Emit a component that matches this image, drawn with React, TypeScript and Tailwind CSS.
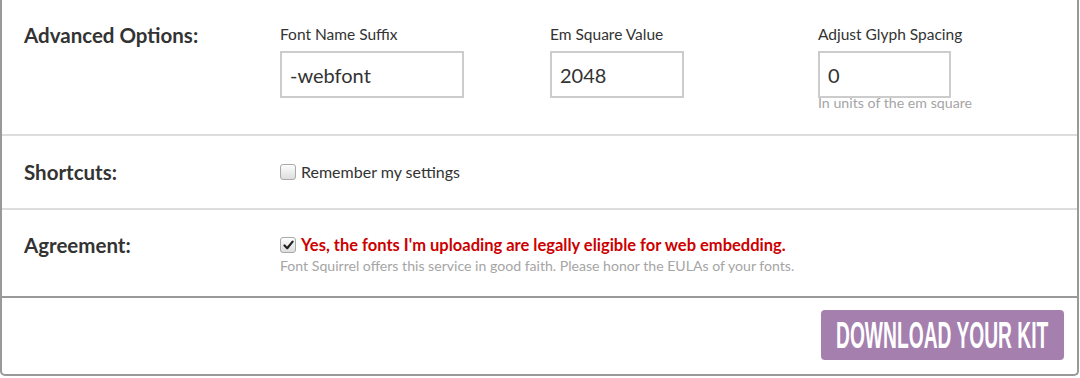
import React from "react";

const Checkbox = ({ checked }: { checked?: boolean }) => (
  <span className="flex h-[16px] w-[16px] shrink-0 items-center justify-center rounded-[3px] border border-[#a9a9a9] bg-gradient-to-b from-[#fcfcfc] to-[#dedede] shadow-[inset_0_1px_0_#fff]">
    {checked && (
      <svg width="11" height="10" viewBox="0 0 11 10">
        <path d="M1.5 5.5 L4.2 8.2 L9.6 1.6" fill="none" stroke="#222" strokeWidth="2.2" strokeLinecap="round" strokeLinejoin="round" />
      </svg>
    )}
  </span>
);

const Field = ({ label, value, width, hint }: { label: string; value: string; width: string; hint?: string }) => (
  <div className="flex flex-col">
    <div className="text-[15.5px] leading-[20px] text-[#333]">{label}</div>
    <div className={`mt-[7px] flex h-[47px] items-center border-2 border-[#cccccc] bg-white px-[8px] text-[20px] text-[#333] ${width}`}>
      {value}
    </div>
    {hint && <div className="mt-[-2px] text-[14.2px] leading-[14px] text-[#a5a5a5]">{hint}</div>}
  </div>
);

export default function App() {
  return (
    <div className="h-[378px] w-[1080px] bg-white" style={{ fontFamily: "Lato, 'Noto Sans', sans-serif" }}>
      <div className="w-[1079px] rounded-b-[5px] border-x-2 border-b-2 border-[#999]">
        {/* Advanced options */}
        <div className="flex h-[136px] border-b-2 border-[#dddddd] pl-[22px] pt-[24px]">
          <div className="w-[256px] text-[20.5px] font-bold leading-[22px] text-[#333]">Advanced Options:</div>
          <div className="flex">
            <div className="w-[270px]">
              <Field label="Font Name Suffix" value="-webfont" width="w-[184px]" />
            </div>
            <div className="w-[268px]">
              <Field label="Em Square Value" value="2048" width="w-[134px]" />
            </div>
            <Field label="Adjust Glyph Spacing" value="0" width="w-[133px]" hint="In units of the em square" />
          </div>
        </div>

        {/* Shortcuts */}
        <div className="flex h-[74px] items-center border-b-2 border-[#dddddd] pl-[22px]">
          <div className="w-[256px] text-[20.5px] font-bold leading-[22px] text-[#333]">Shortcuts:</div>
          <label className="flex items-center gap-[5px] text-[16px] text-[#333]">
            <Checkbox />
            Remember my settings
          </label>
        </div>

        {/* Agreement */}
        <div className="flex h-[88px] border-b-2 border-[#999] pl-[22px] pt-[24px]">
          <div className="w-[256px] text-[20.5px] font-bold leading-[22px] text-[#333]">Agreement:</div>
          <div className="flex flex-col">
            <label className="flex h-[22px] items-center gap-[5px] text-[16.5px] font-bold text-[#cc0000]">
              <Checkbox checked />
              Yes, the fonts I'm uploading are legally eligible for web embedding.
            </label>
            <div className="mt-[1px] text-[14.1px] leading-[18px] text-[#a5a5a5]">
              Font Squirrel offers this service in good faith. Please honor the EULAs of your fonts.
            </div>
          </div>
        </div>

        {/* Footer */}
        <div className="flex h-[76px] justify-end pr-[13px] pt-[12px]">
          <button className="flex h-[50px] w-[243px] items-center justify-center overflow-hidden rounded-[4px] bg-[#a57fae] text-white">
            <span className="shrink-0 whitespace-nowrap font-['Liberation_Sans',sans-serif] text-[37px] font-bold leading-none [transform:scaleX(0.52)]">
              DOWNLOAD YOUR KIT
            </span>
          </button>
        </div>
      </div>
    </div>
  );
}
